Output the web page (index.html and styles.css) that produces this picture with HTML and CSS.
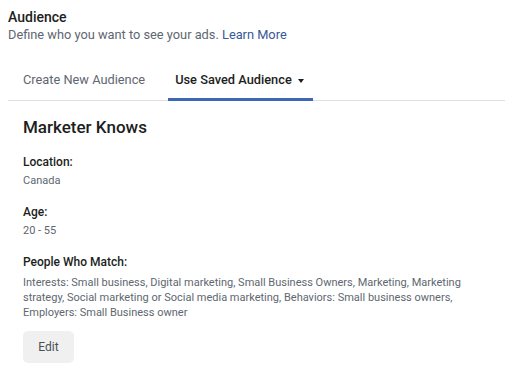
FILE: index.html
```html
<!DOCTYPE html>
<html>
<head>
<meta charset="utf-8">
<link rel="stylesheet" href="styles.css">
</head>
<body>
<div class="page">
  <div class="header">
    <div class="title">Audience</div>
    <div class="subtitle">Define who you want to see your ads. <a class="link" href="#">Learn More</a></div>
  </div>
  <div class="tabs">
    <div class="tab">Create New Audience</div>
    <div class="tab active"><span>Use Saved Audience</span><span class="caret"></span></div>
  </div>
  <div class="content">
    <div class="name">Marketer Knows</div>
    <div class="field">
      <div class="label">Location:</div>
      <div class="value">Canada</div>
    </div>
    <div class="field">
      <div class="label">Age:</div>
      <div class="value">20 - 55</div>
    </div>
    <div class="field">
      <div class="label">People Who Match:</div>
      <div class="value long">Interests: Small business, Digital marketing, Small Business Owners, Marketing, Marketing strategy, Social marketing or Social media marketing, Behaviors: Small business owners, Employers: Small Business owner</div>
    </div>
    <button class="edit">Edit</button>
  </div>
</div>
</body>
</html>
```
FILE: styles.css
```css
html, body {
  margin: 0;
  padding: 0;
  background: #ffffff;
}
body {
  font-family: Roboto, "Liberation Sans", sans-serif;
  color: #1c1e21;
}
.page {
  padding: 8px 7px 0 8px;
  display: flex;
  flex-direction: column;
}
.title {
  font-size: 14px;
  line-height: 18px;
  font-weight: 500;
  color: #1c1e21;
}
.subtitle {
  font-size: 12.8px;
  line-height: 17px;
  color: #606770;
}
.link {
  color: #385898;
  text-decoration: none;
}
.tabs {
  margin-top: 19px;
  display: flex;
  border-bottom: 1px solid #dddfe2;
}
.tab {
  font-size: 12.8px;
  line-height: 16px;
  padding: 10px 15px 10px 15px;
  color: #606770;
  border-bottom: 3px solid transparent;
  margin-bottom: -1px;
}
.tab.active {
  color: #1c1e21;
  font-weight: 500;
  border-bottom-color: #4267b2;
  margin-left: 8px;
  padding-left: 7px;
  padding-right: 9px;
  display: flex;
  align-items: center;
  gap: 6px;
}
.caret {
  width: 0;
  height: 0;
  border-left: 3.5px solid transparent;
  border-right: 3.5px solid transparent;
  border-top: 4px solid #1c1e21;
  margin-top: 1px;
}
.content {
  padding: 16px 15px 0 15px;
  display: flex;
  flex-direction: column;
  align-items: flex-start;
}
.name {
  font-size: 17px;
  line-height: 20px;
  font-weight: 500;
  margin-bottom: 1px;
}
.field {
  margin-top: 16px;
  display: flex;
  flex-direction: column;
  gap: 4px;
}
.label {
  font-size: 12px;
  line-height: 16px;
  font-weight: 500;
  color: #1c1e21;
}
.value {
  font-size: 11px;
  line-height: 14px;
  color: #606770;
}
.value.long {
  line-height: 15px;
  margin-top: 1px;
}
.edit {
  margin-top: 11px;
  width: 51px;
  height: 32px;
  border: none;
  border-radius: 5px;
  background: #f0f0f0;
  font-family: Roboto, "Liberation Sans", sans-serif;
  font-size: 12px;
  color: #4b4f56;
  padding: 0;
}
```
